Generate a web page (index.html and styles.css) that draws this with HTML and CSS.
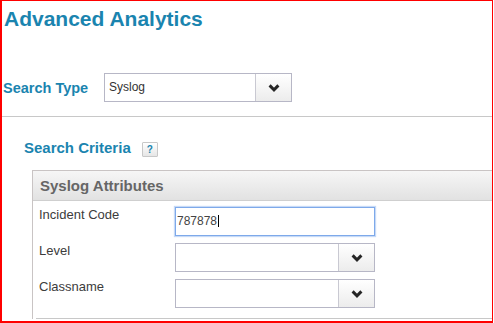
FILE: index.html
```html
<!doctype html>
<html lang="en">
<head>
	<meta charset="UTF-8">
	<title>Advanced Analytics</title>

	<link rel="stylesheet" href="styles.css">

</head>

<body>

	<div id="frame">

		<h1 class="pageTitle">Advanced Analytics</h1>

		<div id="searchTypeRow">
			<label class="searchTypeLabel">Search Type</label>
			<div class="selectBox wide">
				<span class="selectValue">Syslog</span>
				<span class="selectButton">
					<svg width="12" height="8" viewBox="0 0 12 8"><polyline points="1.6,1.4 6,5.8 10.4,1.4" fill="none" stroke="#262626" stroke-width="3"/></svg>
				</span>
			</div>
		</div>

		<div class="divider"></div>

		<div id="criteriaRow">
			<span class="criteriaTitle">Search Criteria</span>
			<span class="helpButton">?</span>
		</div>

		<div id="attributesPanel">
			<div class="panelHead">Syslog Attributes</div>
			<div class="panelBody">

				<div class="fieldRow">
					<label class="fieldLabel">Incident Code</label>
					<div class="textBox focused">787878<span class="caret"></span></div>
				</div>

				<div class="fieldRow">
					<label class="fieldLabel">Level</label>
					<div class="selectBox">
						<span class="selectValue"></span>
						<span class="selectButton">
							<svg width="12" height="8" viewBox="0 0 12 8"><polyline points="1.6,1.4 6,5.8 10.4,1.4" fill="none" stroke="#262626" stroke-width="3"/></svg>
						</span>
					</div>
				</div>

				<div class="fieldRow">
					<label class="fieldLabel">Classname</label>
					<div class="selectBox">
						<span class="selectValue"></span>
						<span class="selectButton">
							<svg width="12" height="8" viewBox="0 0 12 8"><polyline points="1.6,1.4 6,5.8 10.4,1.4" fill="none" stroke="#262626" stroke-width="3"/></svg>
						</span>
					</div>
				</div>

				<div class="rowSeparator"></div>

			</div>
		</div>

	</div>

</body>
</html>
```

FILE: styles.css
```css
html, body {
	margin: 0px;
	padding: 0px;
	background-color: #ffffff;
	font-family: "Liberation Sans", Arial, sans-serif;
}

/* the red outline round the captured area */
#frame {
	width: 493px;
	height: 323px;
	box-sizing: border-box;
	border-style: solid;
	border-color: #ff0000;
	border-width: 1px 1px 2px 2px;
	overflow: hidden;
}

.pageTitle {
	margin: 6px 0 0 0;
	padding-left: 2px;
	font-size: 21px;
	line-height: 24px;
	font-weight: bold;
	color: #1a84af;
}

#searchTypeRow {
	display: flex;
	align-items: center;
	margin-top: 42px;
}
.searchTypeLabel {
	width: 101px;
	padding-left: 1px;
	font-size: 14.5px;
	font-weight: bold;
	color: #1a84af;
}

.selectBox {
	display: flex;
	width: 200px;
	height: 29px;
	box-sizing: border-box;
	border: 1px solid #b7b7c6;
	background-color: #ffffff;
}
.selectBox.wide {
	width: 188px;
}
.selectValue {
	flex: 1;
	padding-left: 4px;
	font-size: 12px;
	line-height: 27px;
	color: #333333;
}
.selectButton {
	width: 35px;
	display: flex;
	align-items: center;
	justify-content: center;
	border-left: 1px solid #c9c9d2;
	background: linear-gradient(#ffffff, #ececec);
}

.divider {
	height: 1px;
	margin-top: 14px;
	background-color: #c8c8c8;
}

#criteriaRow {
	display: flex;
	align-items: flex-start;
	margin: 22px 0 0 22px;
}
.criteriaTitle {
	font-size: 15px;
	line-height: 18px;
	font-weight: bold;
	color: #1a84af;
}
.helpButton {
	width: 16px;
	height: 15px;
	box-sizing: border-box;
	margin: 3px 0 0 11px;
	border: 1px solid #c8c8c8;
	border-radius: 1px;
	background: linear-gradient(#ffffff, #e6e6e6);
	font-size: 10px;
	line-height: 13px;
	font-weight: bold;
	text-align: center;
	color: #1a84af;
}

#attributesPanel {
	width: 600px;
	margin: 13px 0 0 30px;
	border: 1px solid #c9c4c4;
	border-bottom: none;
}
.panelHead {
	height: 29px;
	padding-left: 7px;
	border-bottom: 1px solid #cfcfcf;
	background: linear-gradient(#f6f6f6, #e2e2e2);
	font-size: 15px;
	line-height: 29px;
	font-weight: bold;
	color: #666666;
}
.panelBody {
	display: flex;
	flex-direction: column;
	gap: 7px;
	padding: 6px 0 0 6px;
}

.fieldRow {
	display: flex;
	align-items: flex-start;
	height: 29px;
}
.fieldLabel {
	width: 136px;
	font-size: 13px;
	line-height: 16px;
	color: #3c3c3c;
}

.textBox {
	width: 200px;
	height: 29px;
	box-sizing: border-box;
	padding-left: 1px;
	border: 1px solid #b7b7c6;
	font-size: 12px;
	line-height: 27px;
	color: #444444;
}
.textBox.focused {
	border-color: #7ea9ea;
	box-shadow: 0 0 1px 1px #c7daf6;
}
.caret {
	display: inline-block;
	width: 1px;
	height: 12px;
	margin-left: 1px;
	vertical-align: -2px;
	background-color: #000000;
}

.rowSeparator {
	height: 1px;
	margin: 3px 0 0 -3px;
	background-color: #c8c8c8;
}
```
